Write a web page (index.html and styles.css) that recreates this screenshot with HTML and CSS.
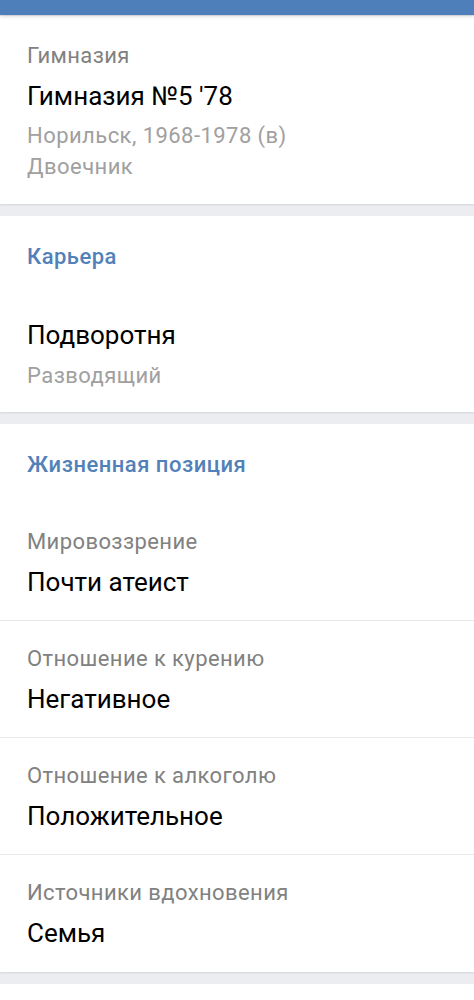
FILE: index.html
```html
<!DOCTYPE html>
<html lang="ru">
<head>
<meta charset="utf-8">
<link rel="stylesheet" href="styles.css">
</head>
<body>
<div class="topbar"></div>
<main class="page">
  <section class="card card-school">
    <div class="label">Гимназия</div>
    <div class="value">Гимназия №5 '78</div>
    <div class="sub">Норильск, 1968-1978 (в)</div>
    <div class="sub">Двоечник</div>
  </section>
  <section class="card card-career">
    <h2 class="title">Карьера</h2>
    <div class="value career-value">Подворотня</div>
    <div class="sub2">Разводящий</div>
  </section>
  <section class="card card-life">
    <h2 class="title">Жизненная позиция</h2>
    <div class="item">
      <div class="label">Мировоззрение</div>
      <div class="value">Почти атеист</div>
    </div>
    <div class="item">
      <div class="label">Отношение к курению</div>
      <div class="value">Негативное</div>
    </div>
    <div class="item">
      <div class="label">Отношение к алкоголю</div>
      <div class="value">Положительное</div>
    </div>
    <div class="item">
      <div class="label">Источники вдохновения</div>
      <div class="value">Семья</div>
    </div>
  </section>
  <section class="card card-tail"></section>
</main>
</body>
</html>
```
FILE: styles.css
```css
* { box-sizing: border-box; margin: 0; padding: 0; }
html, body { background: #ebedf0; }
body {
  font-family: Roboto, "Noto Sans", "Liberation Sans", sans-serif;
  overflow: hidden;
  height: 1000px;
}
.topbar {
  height: 15px;
  background: #4f7fbb;
  box-shadow: 0 1px 4px rgba(0,0,0,0.18);
  position: relative;
  z-index: 2;
}
.page {
  display: flex;
  flex-direction: column;
  gap: 12px;
  padding-top: 1px;
}
.card {
  background: #fff;
  box-shadow: 0 1px 2px rgba(0,0,0,0.10);
}
.label {
  font-size: 22px;
  line-height: 24px;
  letter-spacing: 0.4px;
  color: #818181;
}
.value {
  font-size: 26px;
  line-height: 28px;
  color: #000;
  margin-top: 14px;
}
.sub {
  font-size: 22px;
  line-height: 31px;
  letter-spacing: 0.45px;
  color: #a0a0a0;
}
.sub2 {
  font-size: 22px;
  line-height: 24px;
  letter-spacing: 0.45px;
  color: #a0a0a0;
  margin-top: 15px;
}
.card-school {
  padding: 28px 27px 22px;
}
.card-school .value { margin-bottom: 10px; }
.title {
  font-size: 22px;
  line-height: 24px;
  font-weight: 500;
  letter-spacing: 0.5px;
  color: #5181b8;
}
.card-career {
  padding: 29px 27px 24px;
}
.career-value { margin-top: 52px; }
.card-life {
  padding-top: 29px;
}
.card-life .title {
  padding: 0 27px 27px;
}
.item {
  padding: 26px 27px 24px;
}
.item + .item {
  border-top: 1px solid #e7e8ec;
}
.item:last-child { padding-bottom: 25px; }
.card-tail { height: 40px; }
```
